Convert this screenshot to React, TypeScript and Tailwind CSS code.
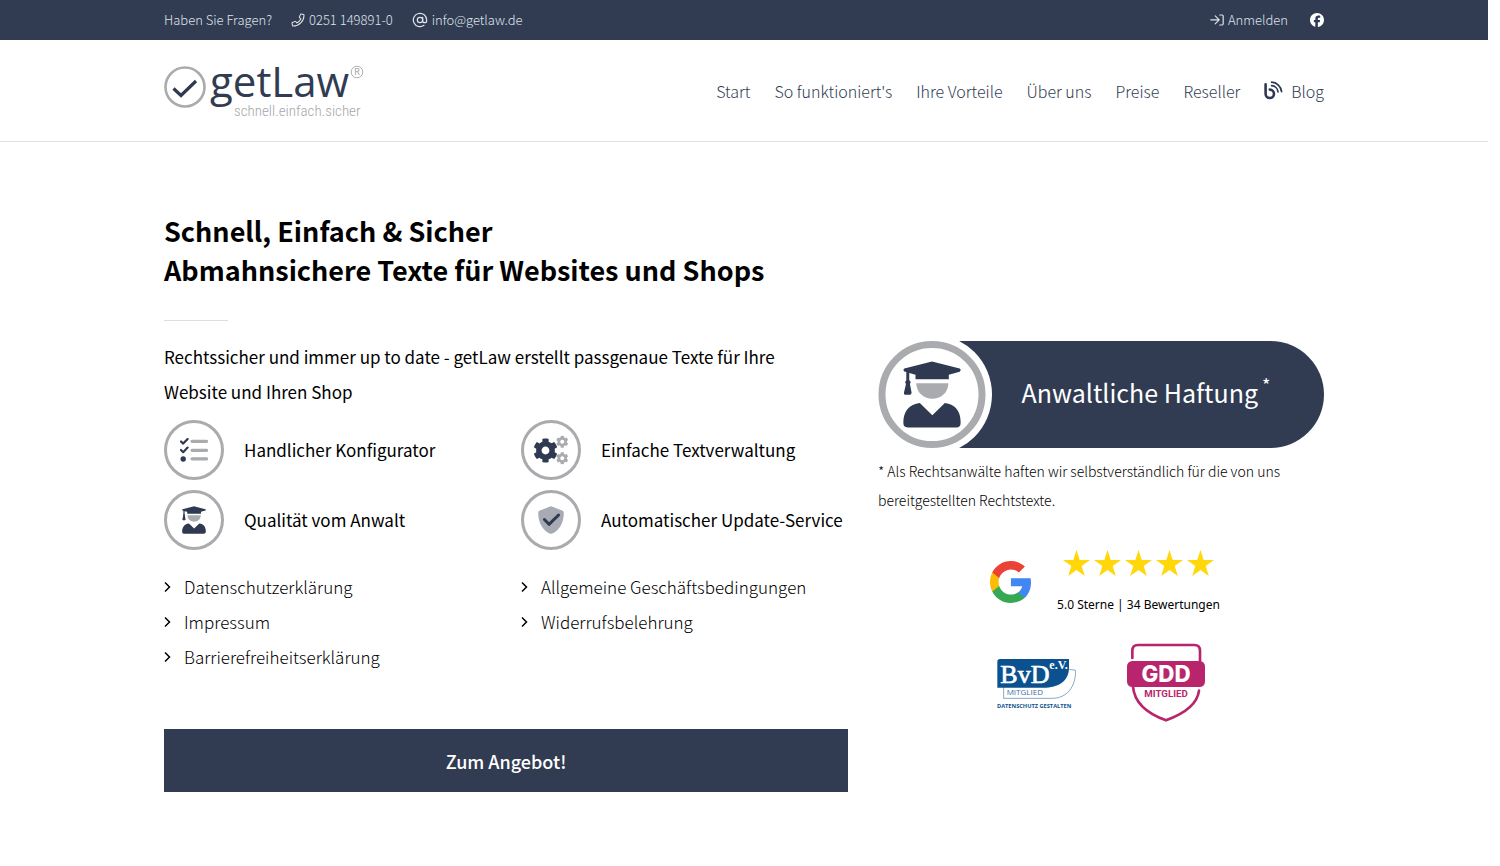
import React from "react";
import { AtSign } from "lucide-react";
import { FaCog, FaPhone } from "react-icons/fa";
import { FaFacebook } from "react-icons/fa6";

const navItems = ["Start", "So funktioniert's", "Ihre Vorteile", "Über uns", "Preise", "Reseller"];

const documents = [
  "Datenschutzerklärung",
  "Allgemeine Geschäftsbedingungen",
  "Impressum",
  "Widerrufsbelehrung",
  "Barrierefreiheitserklärung",
];

function Logo() {
  return (
    <svg viewBox="0 -14 202 82" className="h-[82px] w-[202px]" role="img" aria-label="getLaw – schnell.einfach.sicher">
      <circle cx="21" cy="23" r="19.500" fill="none" stroke="#a9abad" strokeWidth="2.600" />
      <path d="M9.500 24.500L17 31.500L32 17" fill="none" stroke="#2f3a52" strokeWidth="3.200" />
      <text x="46" y="33" fontSize="42" fill="#313c53" className="font-['Open_Sans',sans-serif]">getLaw</text>
      <text x="70" y="52" fontSize="15" fontWeight="300" fill="#a5a7aa" className="font-['Roboto_Condensed','Roboto',sans-serif]">schnell.einfach.sicher</text>
      <circle cx="193" cy="8" r="5.800" fill="none" stroke="#a5a7aa" strokeWidth="0.900" />
      <text x="190.200" y="11.300" fontSize="9" fill="#a5a7aa" className="font-['Roboto',sans-serif]">R</text>
    </svg>
  );
}

function SignInIcon() {
  return (
    <svg viewBox="0 0 14 12" className="h-3 w-3.5" fill="none" stroke="currentColor" strokeWidth="1.200" strokeLinecap="round" strokeLinejoin="round" aria-hidden="true">
      <path d="M.8 5.800H9M5.200 1.800L9.200 5.800L5.200 9.800M9.800 1H12a1.200 1.200 0 0 1 1.200 1.200V9.800A1.200 1.200 0 0 1 12 11H9.800" />
    </svg>
  );
}

function BlogIcon() {
  return (
    <svg viewBox="0 0 19 19" className="size-[19px]" fill="none" stroke="#2f3a52" strokeLinecap="round" aria-hidden="true">
      <path d="M1.600 3.200V12.800A4.200 4.200 0 1 0 5.800 8.600" strokeWidth="2.600" />
      <path d="M7.600 1.200A10.400 10.400 0 0 1 17.600 10.600" strokeWidth="1.700" />
      <path d="M7.600 4.700A6.800 6.800 0 0 1 14 10.800" strokeWidth="1.700" />
    </svg>
  );
}

interface GraduateIconProps {
  className?: string;
  x?: number;
  y?: number;
  width?: number;
  height?: number;
}

function GraduateIcon(props: GraduateIconProps) {
  return (
    <svg viewBox="98 92 176 202" aria-hidden="true" {...props}>
      <path
        fill="#2f3a52"
        d="M102 114L180 94Q186 92 192 94L270 114Q276 119 270 124L237 133V147H136V133L117 128V150Q124 155 119 161L124 187Q124 194 119 194H104Q100 194 101 187L107 161Q102 155 108 150V125L102 123Q97 119 102 114Z"
      />
      <path fill="#a9abae" d="M138 159H236C234 190 212 206 187 206C162 206 140 190 138 159Z" />
      <path fill="#2f3a52" d="M149 219L187 256L225 219C257 223 273 244 273 278Q273 293 260 293H112Q99 293 99 279C99 244 117 223 149 219Z" />
    </svg>
  );
}

function ChecklistIcon() {
  return (
    <svg viewBox="0 0 28 24" className="h-6 w-7" aria-hidden="true">
      <path d="M1 3.500L3.200 5.600L7.600 1M1 12L3.200 14.200L7.600 9.600" fill="none" stroke="#2f3a52" strokeWidth="2.200" strokeLinecap="round" strokeLinejoin="round" />
      <circle cx="3.200" cy="21" r="2.700" fill="#2f3a52" />
      <path d="M12 3.300H26.500M12 12.300H26.500M12 20.800H26.500" stroke="#a9abae" strokeWidth="3.200" strokeLinecap="round" />
    </svg>
  );
}

function GearsIcon() {
  return (
    <svg viewBox="0 0 36 30" className="h-[30px] w-9" aria-hidden="true">
      <FaCog x="0" y="3" size={25} color="#2f3a52" />
      <FaCog x="23" y="0.500" size={12.500} color="#a9abae" />
      <FaCog x="23" y="17" size={12.500} color="#a9abae" />
    </svg>
  );
}

function ShieldIcon() {
  return (
    <svg viewBox="0 0 26 28" className="h-7 w-[26px]" aria-hidden="true">
      <path d="M13 .2Q13.800 .2 24.300 4.600Q25.800 5.300 25.800 7C25.800 17 21 25 13.800 27.700Q13 28 12.200 27.700C5 25 .2 17 .2 7Q.2 5.300 1.700 4.600Q12.200 .2 13 .2Z" fill="#a9abb4" />
      <path d="M6.400 13.500L11 18.300L20.600 9" fill="none" stroke="#2f3a52" strokeWidth="3" strokeLinecap="round" strokeLinejoin="round" />
    </svg>
  );
}

const features = [
  { label: "Handlicher Konfigurator", icon: <ChecklistIcon /> },
  { label: "Einfache Textverwaltung", icon: <GearsIcon /> },
  { label: "Qualität vom Anwalt", icon: <GraduateIcon className="h-7 w-6" /> },
  { label: "Automatischer Update-Service", icon: <ShieldIcon /> },
];

function GoogleLogo() {
  return (
    <svg viewBox="1 1 21.560 22" className="h-[42px] w-[41px]" role="img" aria-label="Google">
      <path fill="#4285F4" d="M22.56 12.25c0-.78-.07-1.53-.2-2.25H12v4.26h5.92c-.26 1.37-1.04 2.53-2.21 3.31v2.77h3.57c2.08-1.92 3.28-4.74 3.28-8.09z" />
      <path fill="#34A853" d="M12 23c2.970 0 5.460-.98 7.280-2.660l-3.570-2.770c-.98.66-2.230 1.060-3.710 1.060-2.860 0-5.290-1.930-6.160-4.530H2.180v2.840C3.990 20.530 7.700 23 12 23z" />
      <path fill="#FBBC05" d="M5.840 14.090c-.22-.66-.35-1.360-.35-2.090s.13-1.430.35-2.090V7.070H2.180C1.430 8.550 1 10.220 1 12s.43 3.450 1.180 4.930l2.850-2.220.81-.62z" />
      <path fill="#EA4335" d="M12 5.380c1.620 0 3.060.56 4.210 1.640l3.150-3.150C17.450 2.090 14.970 1 12 1 7.700 1 3.990 3.470 2.180 7.070l3.660 2.840c.87-2.600 3.300-4.530 6.160-4.530z" />
    </svg>
  );
}

function Star() {
  return (
    <svg viewBox="0 0 27 26" className="h-[26px] w-[27px]" fill="#ffd70a" aria-hidden="true">
      <path d="M13.500 0L16.700 9.900H27L18.700 16L21.800 26L13.500 19.900L5.200 26L8.300 16L0 9.900H10.300Z" />
    </svg>
  );
}

function BvdBadge() {
  return (
    <svg viewBox="48 66 240 156" className="h-[52px] w-20" role="img" aria-label="BvD e.V. Mitglied – Datenschutz gestalten">
      <path d="M71 156V190H215C262 190 287 155 287 106L268 103" fill="none" stroke="#4c7fae" strokeWidth="2" />
      <path d="M60 72H267V98C267 138 235 158 190 158H52V80Q52 72 60 72Z" fill="#0b518f" />
      <text x="61" y="143" fontSize="78" fill="#fff" stroke="#fff" strokeWidth="2" className="font-['Liberation_Serif',serif]">BvD</text>
      <text x="208" y="103" fontSize="36" fontWeight="700" fill="#fff" className="font-['Liberation_Serif',serif]">e.V.</text>
      <text x="80" y="181" fontSize="24" fill="#3d6f9f" className="font-['Open_Sans',sans-serif]">MITGLIED</text>
      <text x="51" y="218" fontSize="17" fontWeight="700" fill="#0b518f" className="font-['Open_Sans',sans-serif]">DATENSCHUTZ GESTALTEN</text>
    </svg>
  );
}

function GddBadge() {
  return (
    <svg viewBox="48 25 240 237" className="h-[79px] w-20" role="img" aria-label="GDD Mitglied">
      <path d="M67 70V48Q67 31 84 31H253Q270 31 270 48V82M69 156C74 212 120 240 168 257C220 238 262 210 267 168" fill="none" stroke="#b9256c" strokeWidth="8" strokeLinecap="round" />
      <rect x="51" y="79" width="234" height="78" rx="16" fill="#b9256c" />
      <text x="168" y="141" fontSize="67" fontWeight="800" fill="#fff" textAnchor="middle" className="font-['Inter',sans-serif]">GDD</text>
      <text x="168" y="188" fontSize="29" fontWeight="700" fill="#b9256c" textAnchor="middle" className="font-['Roboto',sans-serif]">MITGLIED</text>
    </svg>
  );
}

function LiabilityBanner() {
  return (
    <div className="flex h-[107px] items-center rounded-r-full bg-[#313c53] text-white">
      <svg viewBox="0 0 114 107" className="h-[107px] w-[114px] shrink-0" aria-hidden="true">
        <path d="M0 0H54V107H0Z" fill="#fff" />
        <circle cx="54" cy="53.500" r="60" fill="#fff" />
        <circle cx="54" cy="53.500" r="50" fill="none" stroke="#a9abae" strokeWidth="7" />
        <GraduateIcon x={25} y={20} width={58} height={67} />
      </svg>
      <p className="flex grow items-start justify-center pb-1.5 pr-6 text-[25px] leading-9">
        Anwaltliche Haftung
        <sup className="top-0 ml-1 text-lg leading-5">*</sup>
      </p>
    </div>
  );
}

export default function App() {
  return (
    <div className="mr-3 bg-white font-['Source_Sans_Pro','Noto_Sans_CJK_SC',sans-serif] text-black">
      <div className="bg-[#313c53]">
        <div className="mx-auto flex h-10 max-w-[1160px] items-center justify-between text-[13px] font-light text-[#dfe3ea]">
          <div className="flex items-center gap-[19px]">
            <span>Haben Sie Fragen?</span>
            <a href="tel:+492511498910" className="flex items-center gap-1">
              <FaPhone size={14} fill="none" strokeWidth={44} className="overflow-visible p-px" />
              0251 149891-0
            </a>
            <a href="mailto:info@getlaw.de" className="flex items-center gap-1">
              <AtSign size={16} strokeWidth={1.800} />
              info@getlaw.de
            </a>
          </div>
          <div className="flex items-center gap-[22px]">
            <a href="#anmelden" className="flex items-center gap-1">
              <SignInIcon />
              Anmelden
            </a>
            <a href="#facebook" aria-label="Facebook">
              <FaFacebook size={14} color="#fff" />
            </a>
          </div>
        </div>
      </div>

      <header className="border-b border-[#dfe1e3]">
        <div className="mx-auto flex h-[101px] max-w-[1160px] items-center justify-between">
          <a href="#start">
            <Logo />
          </a>
          <nav className="flex items-center gap-6 text-base font-light text-[#313c53]">
            {navItems.map((item) => (
              <a key={item} href="#nav">
                {item}
              </a>
            ))}
            <a href="#blog" className="flex items-center gap-2">
              <BlogIcon />
              Blog
            </a>
          </nav>
        </div>
      </header>

      <main className="mx-auto max-w-[1160px] pb-[74px] pt-[69px]">
        <h1 className="text-[27px] font-bold leading-[39px]">
          Schnell, Einfach &amp; Sicher
          <br />
          Abmahnsichere Texte für Websites und Shops
        </h1>
        <hr className="mb-[18px] mt-[31px] w-16 border-[#dcdee0]" />

        <div className="-mx-[15px] flex">
          <section className="w-3/5 px-[15px]">
            <p className="text-[17px] leading-[35px]">
              Rechtssicher und immer up to date - getLaw erstellt passgenaue Texte für Ihre
              <br />
              Website und Ihren Shop
            </p>

            <ul className="mt-[11px] grid grid-cols-2 gap-x-[30px] gap-y-2.5">
              {features.map(({ label, icon }) => (
                <li key={label} className="flex items-center gap-5 whitespace-nowrap text-[17px]">
                  <span className="flex size-[60px] shrink-0 items-center justify-center rounded-full border-3 border-[#a9abae]">
                    {icon}
                  </span>
                  {label}
                </li>
              ))}
            </ul>

            <ul className="mt-5 grid grid-cols-2 gap-x-[30px] gap-y-px text-[17px] font-light leading-[34px]">
              {documents.map((doc) => (
                <li key={doc}>
                  <a href="#dokument" className="flex items-center gap-[13px] whitespace-nowrap">
                    <svg viewBox="0 0 7 12" className="h-3 w-[7px]" fill="none" stroke="currentColor" strokeWidth="1.500" aria-hidden="true">
                      <path d="M1 1.500L5.500 6L1 10.500" />
                    </svg>
                    {doc}
                  </a>
                </li>
              ))}
            </ul>

            <a href="#angebot" className="mt-[55px] flex h-[63px] items-center justify-center bg-[#313c53] text-lg font-medium text-white">
              Zum Angebot!
            </a>
          </section>

          <aside className="w-2/5 px-[15px] pt-0.5">
            <LiabilityBanner />
            <p className="mt-[9px] text-sm font-light leading-[29px]">
              * Als Rechtsanwälte haften wir selbstverständlich für die von uns bereitgestellten Rechtstexte.
            </p>
            <div className="mt-[35px] flex items-center justify-center gap-[26px] pl-2">
              <GoogleLogo />
              <div className="flex flex-col items-center gap-[21px]">
                <div className="flex gap-1" role="img" aria-label="5 von 5 Sternen">
                  {[1, 2, 3, 4, 5].map((star) => (
                    <Star key={star} />
                  ))}
                </div>
                <p className="font-['Noto_Sans',sans-serif] text-xs leading-4">5.0 Sterne | 34 Bewertungen</p>
              </div>
            </div>
            <div className="mt-[30px] flex items-center justify-center gap-[50px]">
              <BvdBadge />
              <GddBadge />
            </div>
          </aside>
        </div>
      </main>
    </div>
  );
}
